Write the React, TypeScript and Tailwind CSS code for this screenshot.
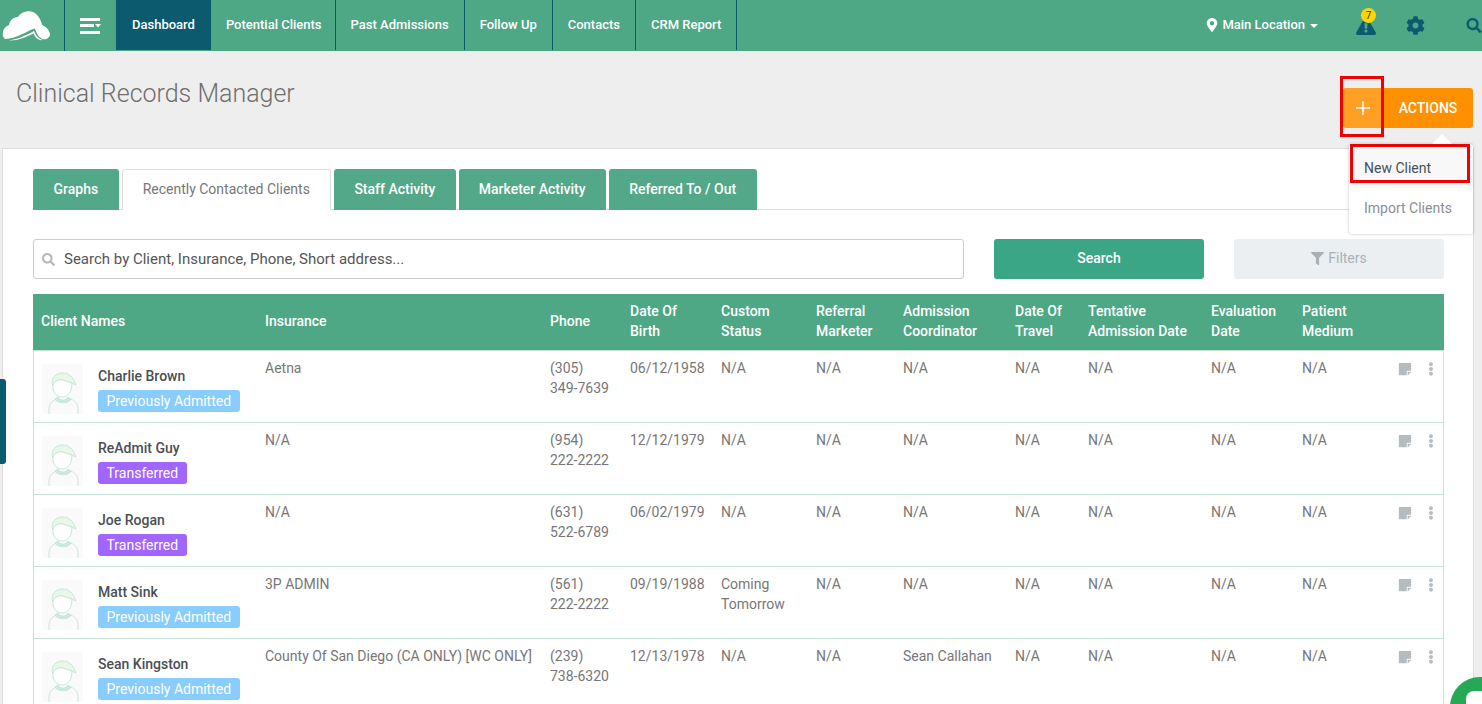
import React from 'react';
import { FaCog, FaEllipsisV, FaExclamationTriangle, FaFilter, FaMapMarkerAlt, FaSearch, FaStickyNote } from 'react-icons/fa';

const navItems = ['Dashboard', 'Potential Clients', 'Past Admissions', 'Follow Up', 'Contacts', 'CRM Report'];
const tabs = ['Graphs', 'Recently Contacted Clients', 'Staff Activity', 'Marketer Activity', 'Referred To / Out'];
const columns = 'grid grid-cols-[225px_285px_80px_91px_95px_87px_112px_73px_123px_91px_88px_1fr]';

const headers = [
  'Client Names',
  'Insurance',
  'Phone',
  'Date Of Birth',
  'Custom Status',
  'Referral Marketer',
  'Admission Coordinator',
  'Date Of Travel',
  'Tentative Admission Date',
  'Evaluation Date',
  'Patient Medium',
];

const clients = [
  { name: 'Charlie Brown', badge: 'Previously Admitted', insurance: 'Aetna', phone: '(305) 349-7639', dob: '06/12/1958', status: 'N/A', coordinator: 'N/A' },
  { name: 'ReAdmit Guy', badge: 'Transferred', insurance: 'N/A', phone: '(954) 222-2222', dob: '12/12/1979', status: 'N/A', coordinator: 'N/A' },
  { name: 'Joe Rogan', badge: 'Transferred', insurance: 'N/A', phone: '(631) 522-6789', dob: '06/02/1979', status: 'N/A', coordinator: 'N/A' },
  { name: 'Matt Sink', badge: 'Previously Admitted', insurance: '3P ADMIN', phone: '(561) 222-2222', dob: '09/19/1988', status: 'Coming Tomorrow', coordinator: 'N/A' },
  { name: 'Sean Kingston', badge: 'Previously Admitted', insurance: 'County Of San Diego (CA ONLY) [WC ONLY]', phone: '(239) 738-6320', dob: '12/13/1978', status: 'N/A', coordinator: 'Sean Callahan' },
];

const navClasses = [
  'bg-[#0b5a6d] px-4',
  'border-r border-[#0b5a6d] pr-[13px] pl-[15px]',
  'border-r border-[#0b5a6d] px-[15px]',
  'border-r border-[#0b5a6d] px-[15px]',
  'border-r border-[#0b5a6d] px-[15px]',
  'border-r border-[#0b5a6d] px-[15px]',
];

const Logo = () => (
  <svg width="50" height="30" viewBox="0 0 50 30" fill="white">
    <path d="M2 25 C1 20 3 16 8 14 C9 8 14 6 17 6 C20 1 27 -1 32 1 C37 3 40 9 41 14 C44 15 48 18 49 23 C49 27 45 29 42 28 C38 27 36 23 34 18 C32 17 28 20 24 22 C17 25 10 28 4 28 C3 27 2 26 2 25 Z" />
    <path d="M8 29.5 C17 28 26 24 33 20 C35 25 38 28 42 29 C37 30 34 26 32.5 22.5 C25 26 16 30 8 29.5 Z" />
  </svg>
);

const MenuIcon = () => (
  <svg width="21" height="16" viewBox="0 0 21 16" fill="white">
    <rect x="0" y="0" width="20" height="3" />
    <rect x="0" y="6" width="14" height="3" />
    <path d="M15 6 H21 L18 9.5 Z" />
    <rect x="0" y="13" width="20" height="3" />
  </svg>
);

const Avatar = () => (
  <div className="h-[50px] w-[41px] shrink-0 bg-[#fafafa]">
    <svg width="41" height="50" viewBox="0 0 41 50" fill="none" stroke="#c5e3d6" strokeWidth="0.9">
      <path d="M11 22 C8 14 14 9 21 9 C27 9 31 13 34 21 L30 19 C25 18 20 15 17 16 C14 17 12 19 11 22 Z" fill="#eaf6e7" />
      <path d="M11 21 C10 28 15 33 20 33 C26 33 30 28 30 19 C25 18 20 15 17 16 C14 17 12 18 11 21 Z" fill="white" />
      <path d="M16 33 C17 37 25 37 26 33 L29 35 C27 40 15 40 13 35 Z" fill="#cfe8dc" />
      <path d="M7 50 V45 C7 40 10 37 14 35 M36 50 V45 C36 40 33 37 29 35" />
    </svg>
  </div>
);

const ClientRow = ({ client }: { client: (typeof clients)[number] }) => (
  <div className={`${columns} h-[72px] border-x border-b border-[#c3e3d8] text-sm leading-5 text-[#777]`}>
    <div className="flex gap-[15px] pt-[13px] pl-2">
      <Avatar />
      <div>
        <div className="pt-[2px] font-medium whitespace-nowrap text-[#4a4f53]">{client.name}</div>
        <span
          className={`mt-1 block w-fit rounded-[3px] px-[8.5px] py-px text-white ${
            client.badge === 'Transferred' ? 'bg-[#a066ff]' : 'bg-[#88cdfd]'
          }`}
        >
          {client.badge}
        </span>
      </div>
    </div>
    <div className="pt-[7px] pl-[6px] whitespace-nowrap">{client.insurance}</div>
    <div className="pt-[7px] pl-[6px]">
      {client.phone.split(' ').map((part) => (
        <div key={part}>{part}</div>
      ))}
    </div>
    <div className="pt-[7px] pl-[6px]">{client.dob}</div>
    <div className="w-[80px] pt-[7px] pl-[6px]">{client.status}</div>
    <div className="pt-[7px] pl-[6px]">N/A</div>
    <div className="pt-[7px] pl-[6px]">{client.coordinator}</div>
    <div className="pt-[7px] pl-[6px]">N/A</div>
    <div className="pt-[7px] pl-[6px]">N/A</div>
    <div className="pt-[7px] pl-[6px]">N/A</div>
    <div className="pt-[7px] pl-[6px]">N/A</div>
    <div className="flex items-start justify-end gap-3 pt-[11px] pr-[5px] text-[#b4bcc0]">
      <FaStickyNote size={14} />
      <FaEllipsisV size={14} />
    </div>
  </div>
);

export default function App() {
  return (
    <div className="relative h-[704px] w-[1482px] overflow-hidden bg-[#eeeeee] font-['Roboto',sans-serif]">
      <nav className="flex h-[51px] items-stretch bg-[#4ea785] text-[13px] font-medium text-white">
        <div className="flex w-[65px] items-center border-r border-[#0b5a6d] pl-[1px]">
          <Logo />
        </div>
        <button className="flex w-[51px] items-center justify-center pr-[1px]" aria-label="Menu">
          <MenuIcon />
        </button>
        {navItems.map((item, i) => (
          <a key={item} className={`flex h-[50px] items-center ${navClasses[i]}`}>
            {item}
          </a>
        ))}
        <div className="ml-auto flex items-center">
          <FaMapMarkerAlt size={14} className="relative left-[1px] -mt-[2px]" />
          <span className="-mt-[2px] ml-[4px]">Main Location</span>
          <span className="ml-[5px] border-x-[4px] border-t-[4px] border-x-transparent border-t-white" />
          <div className="relative mt-[1px] ml-[38px] text-[#0b5a6d]">
            <FaExclamationTriangle size={20} />
            <span className="absolute -top-[8px] left-[5px] flex h-[15px] w-[15px] items-center justify-center rounded-full bg-[#ffd600] text-[10px] font-normal text-[#333]">
              7
            </span>
          </div>
          <FaCog size={19} className="ml-[30px] text-[#0b5a6d]" />
          <FaSearch size={15} className="-mt-[1px] ml-[41px] w-[16px] text-[#0b5a6d]" />
        </div>
      </nav>

      <header className="flex h-[97px] items-start justify-between pr-[9px] pl-4">
        <h1 className="pt-[26px] text-[25px] leading-[34px] font-light text-[#6e6e6e]">Clinical Records Manager</h1>
        <div className="mt-[37px] flex h-10 overflow-hidden rounded-[3px] text-white">
          <button className="flex w-10 items-center justify-center bg-[#ff9f24]" aria-label="Add">
            <svg width="14" height="14" viewBox="0 0 14 14" stroke="white" strokeWidth="1.6">
              <path d="M7 0 V14 M0 7 H14" />
            </svg>
          </button>
          <button className="w-[90px] bg-[#ff9000] text-sm font-medium">ACTIONS</button>
        </div>
      </header>

      <main className="mr-2 ml-[2px] border border-[#dddddd] bg-white pt-5 pr-[29px] pl-[30px]">
        <div className="flex h-[41px] gap-[3px] border-b border-[#dddddd]">
          {tabs.map((tab, i) => (
            <button
              key={tab}
              className={`h-[41px] rounded-t-[3px] pb-[2px] text-sm ${
                i === 1
                  ? 'border border-b-0 border-[#dddddd] bg-white px-5 text-[#777]'
                  : i === 3
                    ? 'bg-[#52a888] px-5 font-medium text-white'
                    : 'bg-[#52a888] px-[20.5px] font-medium text-white'
              }`}
            >
              {tab}
            </button>
          ))}
        </div>

        <div className="mt-[29px] flex h-10 gap-[30px]">
          <div className="flex w-[931px] items-center gap-[9px] rounded-[3px] border border-[#cccccc] pl-2 text-[15px] text-[#555]">
            <FaSearch size={13} className="text-[#b4b8bb]" />
            Search by Client, Insurance, Phone, Short address...
          </div>
          <button className="w-[210px] rounded-[3px] bg-[#3ba686] pb-[2px] text-sm font-medium text-white">Search</button>
          <button className="flex w-[210px] items-center justify-center gap-[4px] rounded-[3px] bg-[#eceff1] pb-[2px] text-sm text-[#a9b1b6]">
            <FaFilter size={13} />
            Filters
          </button>
        </div>

        <div className={`${columns} mt-[15px] h-[57px] items-center border-b border-[#c3e3d8] bg-[#4ea785] pb-[2px] text-sm leading-5 font-medium text-white`}>
          {headers.map((h, i) => (
            <div key={h} className={i === 0 ? 'pl-2' : i === 3 ? 'w-[70px] pl-[7px]' : 'pl-[7px]'}>
              {h}
            </div>
          ))}
        </div>
        {clients.map((c) => (
          <ClientRow key={c.name} client={c} />
        ))}
      </main>

      <div className="absolute top-[379px] left-0 h-[85px] w-[6px] rounded-r-[3px] bg-[#0b5a6d]" />

      {/* actions dropdown */}
      <div className="absolute top-[144px] left-[1349px] h-[90px] w-[124px] rounded-[3px] bg-white pt-1 text-sm shadow-[0_0_3px_rgba(0,0,0,0.25)]">
        <div className="absolute -top-[10px] left-[83px] border-x-[10px] border-b-[10px] border-x-transparent border-b-white" />
        <div className="flex h-10 items-center bg-[#f8f8f8] pl-[15px] text-[#44505a]">New Client</div>
        <div className="flex h-10 items-center pl-[15px] text-[#8a8f93]">Import Clients</div>
      </div>

      {/* red annotation boxes */}
      <div className="absolute top-[76px] left-[1340px] h-[61px] w-[44px] border-[3px] border-[#f00000]" />
      <div className="absolute top-[144px] left-[1350px] h-[39px] w-[120px] border-[3px] border-[#f00000]" />

      <div className="absolute top-[677px] left-[1450px] h-[60px] w-[60px] rounded-full bg-[#27a857]">
        <div className="absolute top-[14px] left-[16px] h-10 w-10 rounded-lg bg-white" />
      </div>
    </div>
  );
}
